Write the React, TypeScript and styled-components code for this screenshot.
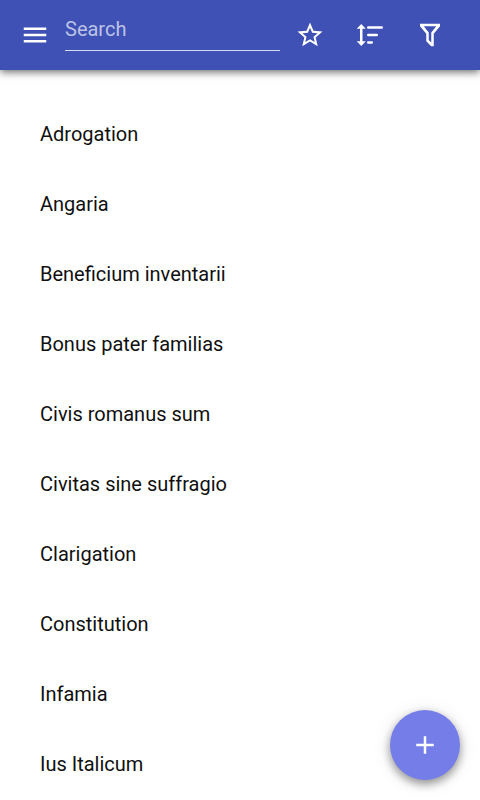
import React from "react";
import styled, { createGlobalStyle } from "styled-components";

const GlobalStyle = createGlobalStyle`
  * { box-sizing: border-box; }
  html, body { margin: 0; background: #ffffff; }
  body { font-family: Roboto, "Liberation Sans", sans-serif; overflow: hidden; }
  button, input { font-family: inherit; }
`;

const Screen = styled.div`
  height: 100vh;
  display: flex;
  flex-direction: column;
  overflow: hidden;
`;

const Toolbar = styled.header`
  flex: none;
  display: flex;
  align-items: center;
  height: 70px;
  padding: 0 20px 0 5px;
  background: #3f51b5;
  box-shadow: 0 2px 8px rgba(0, 0, 0, 0.6);
  z-index: 1;
`;

const IconButton = styled.button`
  flex: none;
  display: grid;
  place-items: center;
  width: 60px;
  height: 60px;
  padding: 0;
  border: 0;
  background: transparent;
  color: #ffffff;
  cursor: pointer;
`;

const SearchField = styled.input`
  flex: 1;
  min-width: 0;
  height: 44px;
  margin-bottom: 12px;
  padding: 0;
  border: 0;
  border-bottom: 1px solid #d5d9ef;
  outline: 0;
  background: transparent;
  color: #ffffff;
  font-size: 20px;
  &::placeholder { color: #bcc3e5; opacity: 1; }
`;

const TermList = styled.ul`
  flex: 1;
  min-height: 0;
  margin: 0;
  padding: 30px 0 0;
  overflow: hidden;
  list-style: none;
`;

const Term = styled.li`
  display: flex;
  align-items: center;
  height: 70px;
  padding: 0 40px 2px;
  color: #101010;
  font-size: 20px;
`;

const AddButton = styled.button`
  position: fixed;
  right: 20px;
  bottom: 20px;
  display: grid;
  place-items: center;
  width: 70px;
  height: 70px;
  padding: 0;
  border: 0;
  border-radius: 50%;
  background: #757de8;
  color: #ffffff;
  box-shadow: 0 4px 10px rgba(0, 0, 0, 0.4), 0 2px 20px rgba(0, 0, 0, 0.1);
  cursor: pointer;
`;

const Icon = ({ d }: { d: string }) => (
  <svg width="30" height="30" viewBox="0 0 24 24" fill="currentColor" aria-hidden="true">
    <path d={d} />
  </svg>
);

const paths = {
  menu: "M3 18h18v-2H3v2zm0-5h18v-2H3v2zm0-7v2h18V6H3z",
  star: "M22 9.24l-7.19-.62L12 2 9.19 8.63 2 9.24l5.46 4.73L5.82 21 12 17.27 18.18 21l-1.63-7.03L22 9.24zM12 15.4l-3.76 2.27 1-4.28-3.32-2.88 4.38-.38L12 6.1l1.71 4.04 4.38.38-3.32 2.88 1 4.28L12 15.4z",
  sort: "M6 7h2.6L5 3.2 1.4 7H4v10H1.4L5 20.8 8.6 17H6zM10.600 5a1 1 0 0 0 0 2H21.400a1 1 0 0 0 0-2zM10.600 11a1 1 0 0 0 0 2H17.400a1 1 0 0 0 0-2zM10.600 17a1 1 0 0 0 0 2H13.400a1 1 0 0 0 0-2z",
  filter: "M4 3h16v2l-5 6v10h-2l-4-4v-6L4 5V3zm3 2 4 5v6l2 2v-8l4-5H7z",
  add: "M19 13h-6v6h-2v-6H5v-2h6V5h2v6h6v2z",
};

const terms = [
  "Adrogation",
  "Angaria",
  "Beneficium inventarii",
  "Bonus pater familias",
  "Civis romanus sum",
  "Civitas sine suffragio",
  "Clarigation",
  "Constitution",
  "Infamia",
  "Ius Italicum",
];

export default function App() {
  return (
    <Screen>
      <GlobalStyle />
      <Toolbar>
        <IconButton aria-label="Menu"><Icon d={paths.menu} /></IconButton>
        <SearchField type="text" placeholder="Search" aria-label="Search" />
        <IconButton aria-label="Favorites"><Icon d={paths.star} /></IconButton>
        <IconButton aria-label="Sort"><Icon d={paths.sort} /></IconButton>
        <IconButton aria-label="Filter"><Icon d={paths.filter} /></IconButton>
      </Toolbar>
      <TermList>
        {terms.map((term) => <Term key={term}>{term}</Term>)}
      </TermList>
      <AddButton aria-label="Add term"><Icon d={paths.add} /></AddButton>
    </Screen>
  );
}
